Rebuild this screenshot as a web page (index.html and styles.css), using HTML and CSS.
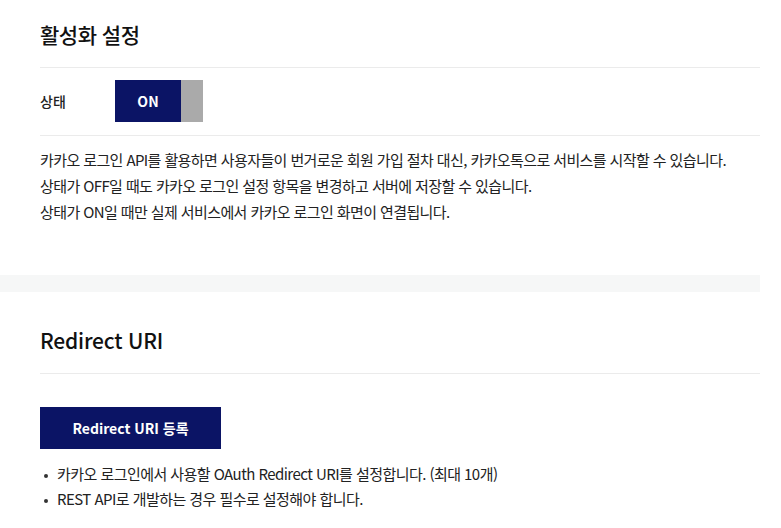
FILE: index.html
```html
<!DOCTYPE html>
<html lang="ko">
<head>
  <meta charset="UTF-8" />
  <meta name="viewport" content="width=device-width, initial-scale=1.0">
  <title>카카오 로그인 – 설정</title>
  <link rel="stylesheet" href="styles.css">
</head>
<body>
  <div class="page">
    <section class="panel">
      <h2 class="panel-title">활성화 설정</h2>

      <div class="state-row">
        <span class="state-label">상태</span>
        <div class="toggle">
          <span class="toggle-on">ON</span>
          <span class="toggle-knob"></span>
        </div>
      </div>

      <div class="desc">
        <p>카카오 로그인 API를 활용하면 사용자들이 번거로운 회원 가입 절차 대신, 카카오톡으로 서비스를 시작할 수 있습니다.</p>
        <p>상태가 OFF일 때도 카카오 로그인 설정 항목을 변경하고 서버에 저장할 수 있습니다.</p>
        <p>상태가 ON일 때만 실제 서비스에서 카카오 로그인 화면이 연결됩니다.</p>
      </div>
    </section>

    <div class="divider-band"></div>

    <section class="panel">
      <h2 class="panel-title title-latin">Redirect URI</h2>

      <div class="redirect-body">
        <button type="button" class="button">Redirect URI 등록</button>
        <ul class="notes">
          <li>카카오 로그인에서 사용할 OAuth Redirect URI를 설정합니다. (최대 10개)</li>
          <li>REST API로 개발하는 경우 필수로 설정해야 합니다.</li>
        </ul>
      </div>
    </section>
  </div>
</body>
</html>
```

FILE: styles.css
```css
body {
  margin: 0;
  background-color: #fff;
  font-family: "Noto Sans CJK KR", "Noto Sans", sans-serif;
  color: #222;
}

.page {
  width: 760px;
}

.panel {
  padding-left: 40px;
}

.panel-title {
  margin: 0;
  padding: 19px 0 18px;
  font-size: 21px;
  line-height: 30px;
  font-weight: 500;
  color: #111;
  letter-spacing: -0.5px;
  border-bottom: 1px solid #ebebeb;
}

.title-latin {
  padding-top: 33px;
  letter-spacing: -0.2px;
}

.state-row {
  display: flex;
  align-items: center;
  padding: 12px 0 13px;
  border-bottom: 1px solid #ebebeb;
}

.state-label {
  width: 75px;
  font-size: 14px;
  font-weight: 500;
}

.toggle {
  display: flex;
  height: 42px;
}

.toggle-on {
  width: 66px;
  background-color: #0b1465;
  color: white;
  font-size: 14px;
  font-weight: bold;
  display: flex;
  align-items: center;
  justify-content: center;
}

.toggle-knob {
  width: 22px;
  background-color: #aaa;
}

.desc {
  padding: 11px 0 50px;
}

.desc p {
  margin: 0;
  font-size: 15px;
  line-height: 26px;
  letter-spacing: -0.6px;
}

.divider-band {
  height: 17px;
  background-color: #f6f7f7;
}

.redirect-body {
  padding-top: 33px;
}

.button {
  display: block;
  width: 181px;
  height: 42px;
  background-color: #0b1465;
  color: white;
  border: none;
  font-family: inherit;
  font-size: 14px;
  font-weight: bold;
  cursor: pointer;
}

.notes {
  margin: 12px 0 0;
  padding: 0;
  list-style: none;
}

.notes li {
  position: relative;
  padding-left: 17px;
  font-size: 15px;
  line-height: 25px;
  letter-spacing: -0.55px;
}

/* 목록 점 */
.notes li::before {
  content: "";
  position: absolute;
  left: 4px;
  top: 13px;
  width: 4px;
  height: 4px;
  border-radius: 50%;
  background-color: #333;
}
```
